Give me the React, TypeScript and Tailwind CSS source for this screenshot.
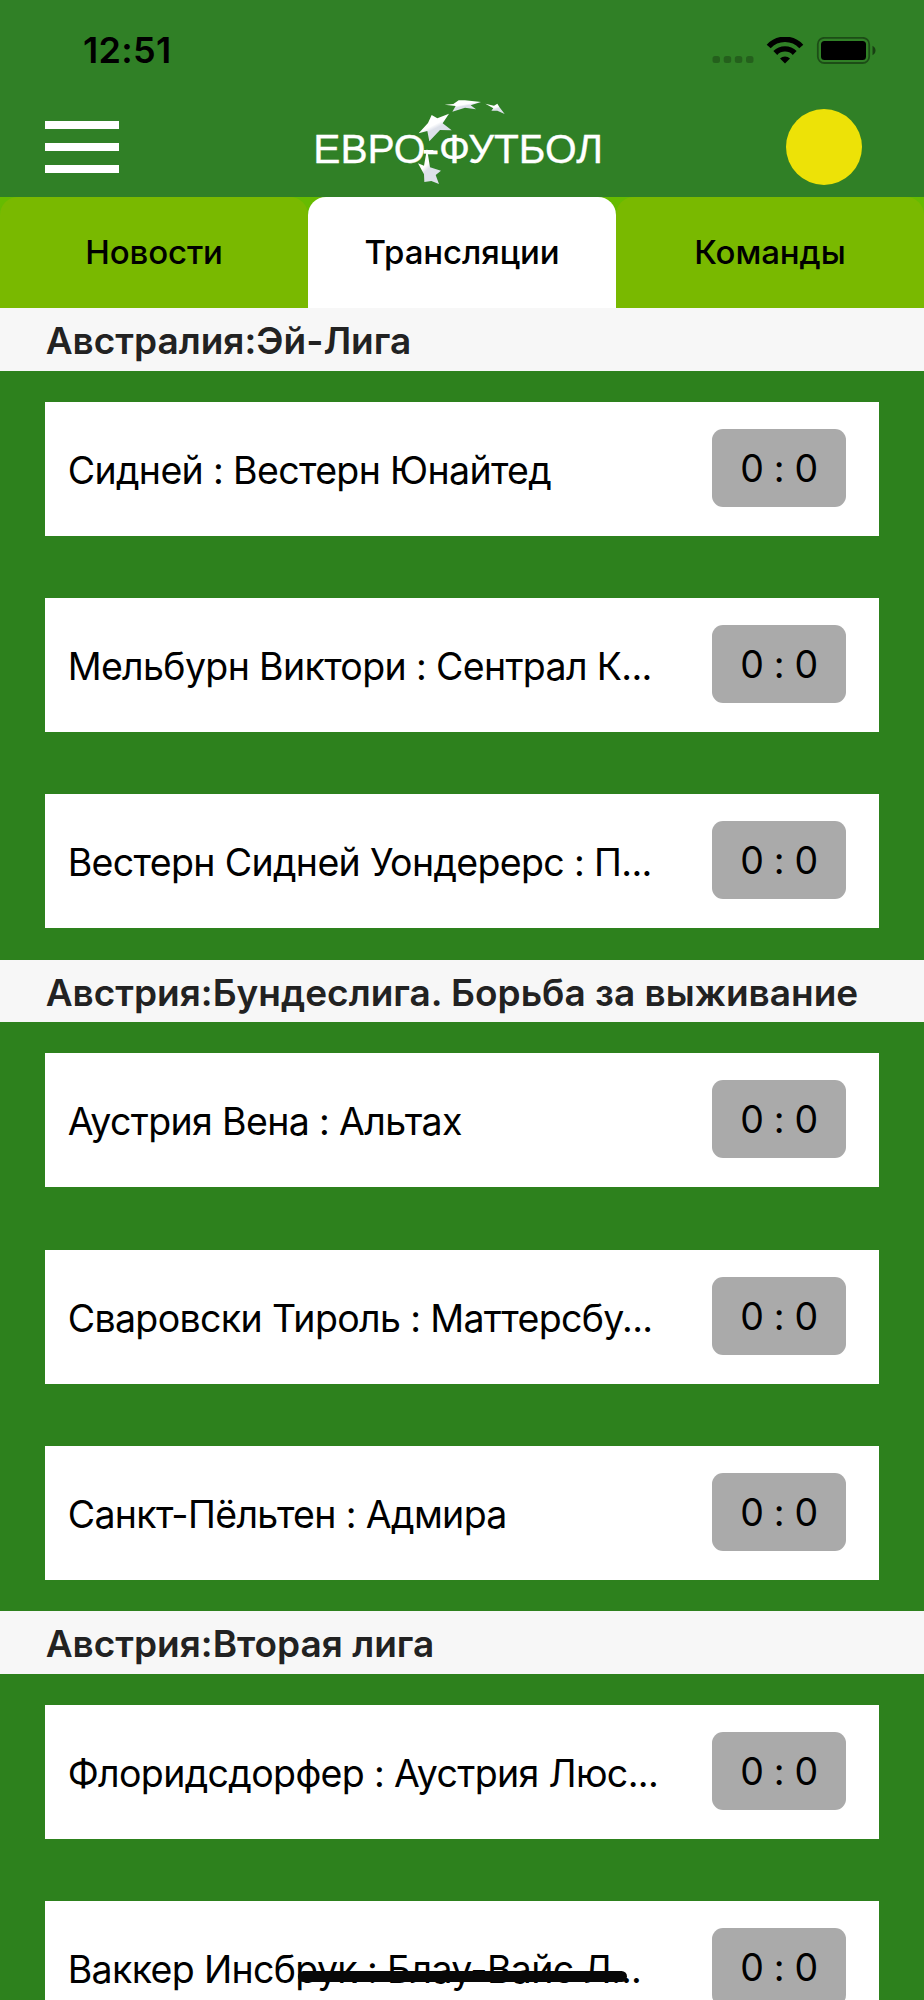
import React from 'react';

interface League {
    title: string;
    matches: string[];
}

const tabs = ['Новости', 'Трансляции', 'Команды'];

const leagues: League[] = [
    {
        title: 'Австралия:Эй-Лига',
        matches: ['Сидней : Вестерн Юнайтед', 'Мельбурн Виктори : Сентрал К...', 'Вестерн Сидней Уондерерс : П...'],
    },
    {
        title: 'Австрия:Бундеслига. Борьба за выживание',
        matches: ['Аустрия Вена : Альтах', 'Сваровски Тироль : Маттерсбу...', 'Санкт-Пёльтен : Адмира'],
    },
    {
        title: 'Австрия:Вторая лига',
        matches: ['Флоридсдорфер : Аустрия Люс...', 'Ваккер Инсбрук : Блау-Вайс Л...'],
    },
];

const StatusBar: React.FC = () => (
    <div className="flex h-[98px] items-start justify-between pl-[83px] pr-[48px] pt-[29px]">
        <span className="text-[36px] leading-[43px] font-[560] tracking-[0.3px] text-black">12:51</span>
        <svg className="mt-[8px] h-[27px] w-[164px]" viewBox="0 0 164 27">
            <g fill="#000" fillOpacity="0.25">
                <rect x="0.5" y="19" width="7.5" height="7" rx="2.5" />
                <rect x="11.7" y="19" width="7.5" height="7" rx="2.5" />
                <rect x="22.8" y="19" width="7.5" height="7" rx="2.5" />
                <rect x="34" y="19" width="7.5" height="7" rx="2.5" />
            </g>
            <g fill="none" stroke="#000" strokeWidth="5.4">
                <path d="M56.700 9.500A22 22 0 0 1 89.300 9.500" />
                <path d="M63.300 16A13.500 13.500 0 0 1 82.700 16" />
            </g>
            <path d="M73 26.500l-5-5a7.500 7.500 0 0 1 10 0z" />
            <rect x="105.800" y="0.800" width="51.400" height="25.200" rx="6.500" fill="none" stroke="#000" strokeOpacity="0.4" strokeWidth="1.800" />
            <rect x="109" y="4" width="45" height="19" rx="3.500" />
            <path d="M160.500 8.800c4 2 4 7.500 0 9.500z" fillOpacity="0.5" />
        </svg>
    </div>
);

const Logo: React.FC = () => (
    <svg className="ml-[5px] h-[98px] w-[330px]" viewBox="0 54 990 294">
        <defs>
            <linearGradient id="star" x1="0" y1="0" x2="0.6" y2="1">
                <stop offset="0.5" stopColor="#fff" />
                <stop offset="0.62" stopColor="#dde1ea" />
            </linearGradient>
        </defs>
        <g fill="url(#star)">
            <path d="M464 74L490 72L506 61L525 61L573 66L542 76L558 88L525 83L487 95L497 78Z" />
            <path d="M586 71L612 77L622 71L628 81L644 102L622 92L604 92L610 85Z" />
            <path d="M386 160L414 129L425 105L442 115L477 101L458 130L485 151L450 150L418 184L412 153Z" />
            <path d="M411 206L420 262L453 272L437 285L447 312L424 303L403 306L402 283L384 250L402 257Z" />
        </g>
        <text x="70" y="248" fontSize="120" fill="#fff" stroke="#fff" strokeWidth="1" fontFamily="Liberation Sans, Arial, sans-serif" textLength="869" lengthAdjust="spacingAndGlyphs">ЕВРО-ФУТБОЛ</text>
        <rect x="401" y="210" width="29" height="11" fill="#fff" />
    </svg>
);

const Header: React.FC = () => (
    <header className="flex h-[98px] items-center justify-between pl-[45px] pr-[62px]">
        <button type="button" className="flex w-[74px] flex-col gap-[14.500px]">
            <span className="h-[7.700px] bg-white" />
            <span className="h-[7.700px] bg-white" />
            <span className="h-[7.700px] bg-white" />
        </button>
        <Logo />
        <div className="mb-px h-[76px] w-[76px] rounded-full bg-[#ede207]" />
    </header>
);

const MatchCard: React.FC<{ teams: string }> = ({ teams }) => (
    <div className="mx-[45px] my-[31.200px] flex h-[134px] justify-between bg-white pl-[22.700px] pr-[33px] pt-[27px]">
        <span className="pt-[20px] text-[37.500px] leading-[44px] tracking-[-0.65px] whitespace-nowrap text-black">{teams}</span>
        <span className="flex h-[78px] w-[134px] items-center justify-center rounded-[11px] bg-[#aaaaaa] pt-[2px] text-[37.500px] tracking-[-0.3px] text-black">
            0 : 0
        </span>
    </div>
);

const App: React.FC = () => (
    <div className="relative h-[2000px] w-[924px] overflow-hidden bg-[#2d811d] font-['Inter','Noto_Sans',sans-serif]">
        <div className="bg-[#308026] pb-px">
            <StatusBar />
            <Header />
        </div>
        <nav className="grid h-[111px] grid-cols-3 bg-[#66bb00]">
            {tabs.map((tab) => (
                <button
                    key={tab}
                    type="button"
                    className={`rounded-t-[18px] pt-px text-[33px] font-medium tracking-[-0.1px] text-black ${tab === 'Трансляции' ? 'bg-white' : 'bg-[#79b900]'}`}
                >
                    {tab}
                </button>
            ))}
        </nav>
        <main className="[font-feature-settings:'calt'_0]">
            {leagues.map((league) => (
                <section key={league.title}>
                    <h2 className="h-[62.500px] bg-[#f7f7f7] pl-[45.700px] text-[37px] leading-[66px] font-semibold whitespace-nowrap text-[#222222]">
                        {league.title}
                    </h2>
                    {league.matches.map((teams) => (
                        <div key={teams} className="flow-root h-[196.400px]">
                            <MatchCard teams={teams} />
                        </div>
                    ))}
                </section>
            ))}
        </main>
        <div className="absolute bottom-[18px] left-[298px] h-[11px] w-[329px] rounded-full bg-[#080808]" />
    </div>
);

export default App;
